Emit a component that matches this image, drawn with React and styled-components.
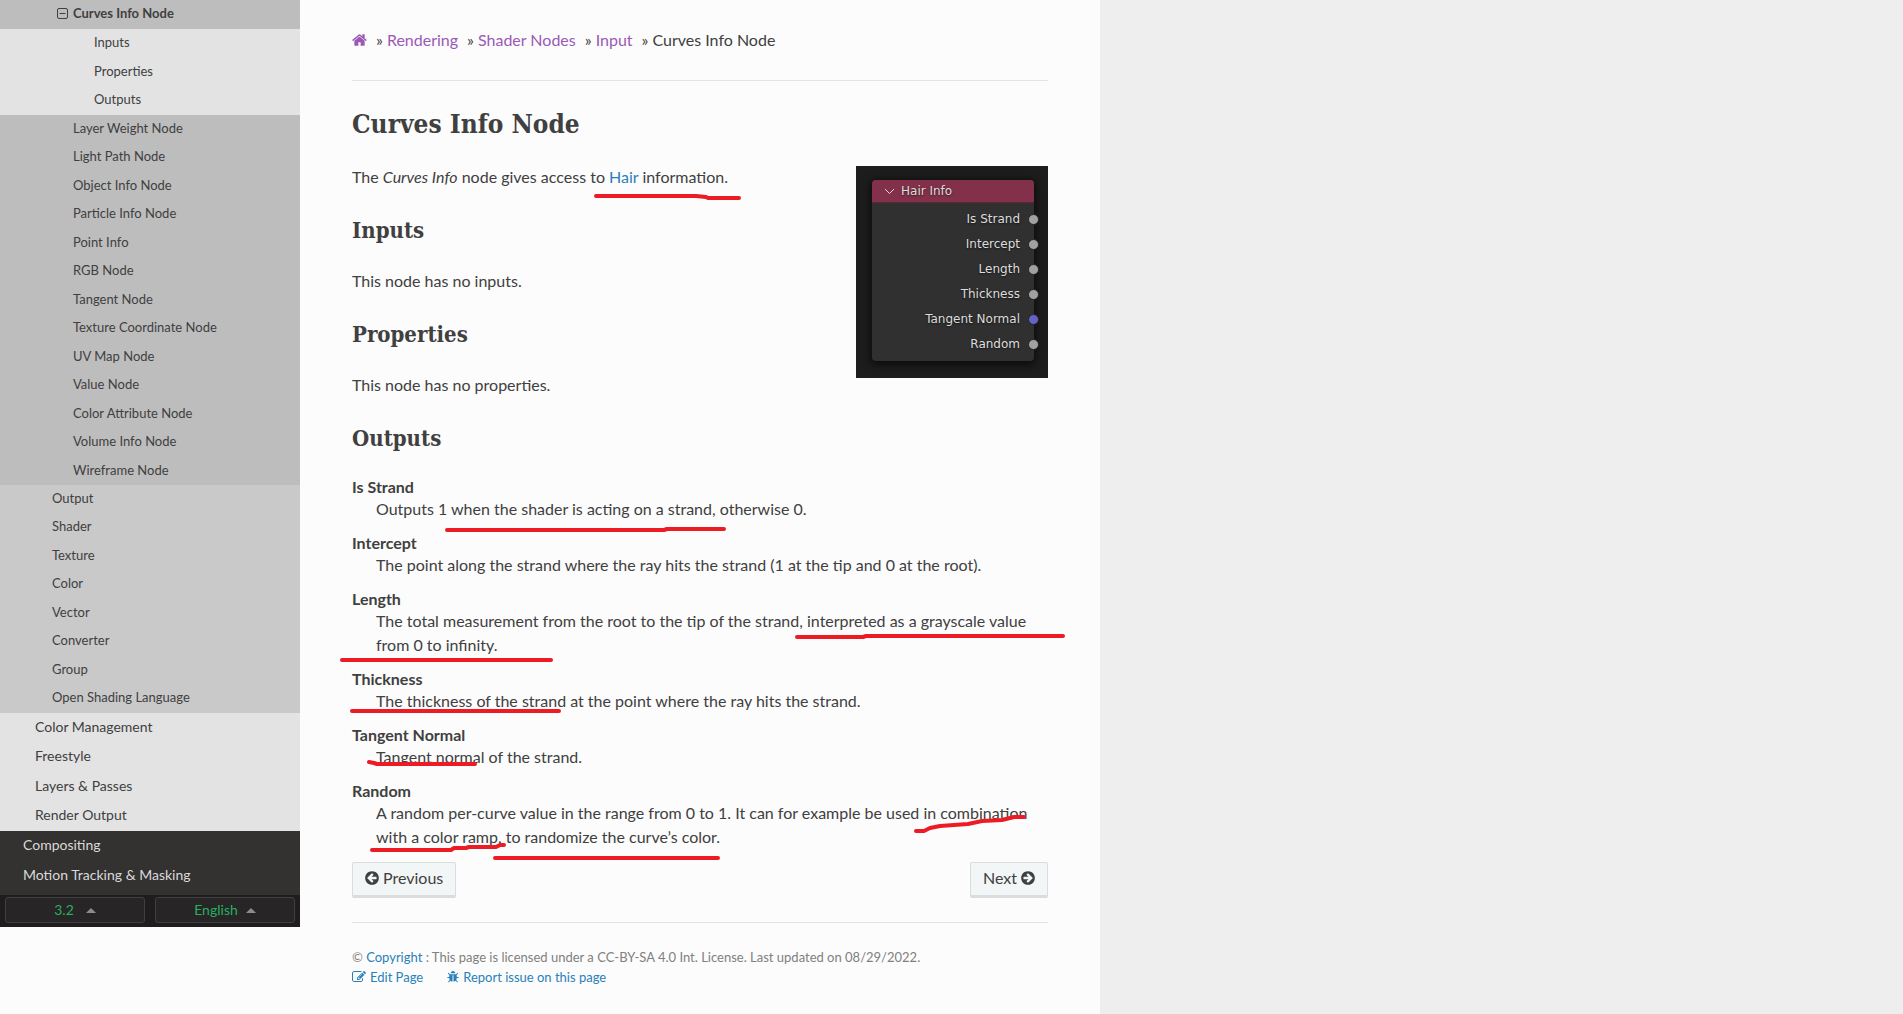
import React from "react";
import styled, { createGlobalStyle } from "styled-components";

const GlobalStyle = createGlobalStyle`
  *, *::before, *::after { box-sizing: border-box; }
  body {
    margin: 0;
    background: #eeeeee;
    color: #404040;
    font-family: Lato, "Liberation Sans", sans-serif;
    font-size: 16px;
    line-height: 24px;
  }
  a { color: #2980b9; text-decoration: none; }
`;

const Shell = styled.div`
  position: relative;
  display: flex;
  align-items: flex-start;
  max-width: 1100px;
  min-height: 100vh;
  background: #fcfcfc;
`;

/* Sidebar */

const Sidebar = styled.nav`
  flex: 0 0 300px;
  background: #343131;
`;

const MenuList = styled.ul`
  display: grid;
  grid-auto-rows: ${(p) => p.$rows};
  margin: 0;
  padding: 0 0 ${(p) => p.$bottom || 0}px;
  list-style: none;
  background: ${(p) => p.$bg};
`;

const MenuLink = styled.a`
  display: flex;
  align-items: center;
  height: 100%;
  padding-left: ${(p) => p.$indent}px;
  padding-bottom: 3px;
  color: ${(p) => (p.$light ? "#d9d9d9" : "#404040")};
  font-size: ${(p) => p.$size}px;
  font-weight: ${(p) => (p.$current ? 700 : 400)};
  line-height: 18px;
`;

const Toggle = styled.svg`
  width: 11px;
  height: 11px;
  margin: 0 5px 0 -16px;
`;

const Versions = styled.div`
  display: grid;
  grid-template-columns: 1fr 1fr;
  gap: 10px;
  padding: 2px 5px 4px;
  background: #1f1d1d;
`;

const VersionButton = styled.button`
  display: flex;
  align-items: center;
  justify-content: center;
  gap: ${(p) => p.$gap}px;
  height: 26px;
  padding: 0;
  border: 1px solid #414040;
  border-radius: 3px;
  background: #272525;
  color: #27ae60;
  font: 14px/18px Lato, "Liberation Sans", sans-serif;
`;

const Caret = styled.span`
  border: 5px solid transparent;
  border-top: 0;
  border-bottom-color: #8d8c8c;
`;

/* Content */

const Main = styled.main`
  flex: 1;
  min-width: 0;
  padding: 28px 52px 24px;
`;

const Crumbs = styled.ul`
  display: flex;
  gap: 9px;
  margin: 0;
  padding: 0;
  list-style: none;
`;

const Crumb = styled.li`
  display: flex;
  align-items: center;
  gap: 4px;
  a { display: flex; color: #9b59b6; }
`;

const Rule = styled.hr`
  height: 1px;
  margin: ${(p) => p.$top}px 0 24px;
  border: 0;
  background: #e1e4e5;
`;

const slab = `"Roboto Slab", "DejaVu Serif Condensed", "DejaVu Serif", serif`;

const Title = styled.h1`
  margin: 0 0 22px;
  font: 700 26px/38px ${slab};
`;

const Heading = styled.h2`
  margin: 0 0 22px;
  font: 700 22px/34px ${slab};
`;

const Text = styled.p`
  margin: 0 0 24px;
`;

const Definitions = styled.dl`
  margin: 0 0 13px;
`;

const Term = styled.dt`
  font-weight: 700;
  line-height: 20px;
`;

const Detail = styled.dd`
  margin: 0 0 12px 24px;
  &:last-child { margin-bottom: 0; }
`;

const Pager = styled.div`
  display: flex;
  justify-content: space-between;
`;

const PagerLink = styled.a`
  display: flex;
  align-items: center;
  gap: 4px;
  height: 36px;
  padding: 0 12px 4px;
  border: 1px solid rgba(0, 0, 0, 0.1);
  border-radius: 2px;
  background: #f3f6f6;
  box-shadow: inset 0 -2px 0 rgba(0, 0, 0, 0.1);
  color: #404040;
`;

const Footer = styled.footer`
  color: #808080;
  font-size: 13px;
  line-height: 20px;
`;

const FooterLinks = styled.div`
  display: flex;
  gap: 24px;
  a { display: flex; align-items: center; gap: 4px; }
`;

const Glyph = styled.svg`
  width: ${(p) => p.$width}px;
  height: ${(p) => p.$height}px;
  fill: currentColor;
`;

/* Node preview */

const Preview = styled.figure`
  float: right;
  width: 192px;
  margin: 1px 0 24px 24px;
  padding: 14px 14px 17px 16px;
  background: #1d1d1d;
  color: #dddddd;
  font: 12px/25px "DejaVu Sans", sans-serif;
  text-shadow: 0 1px 2px rgba(0, 0, 0, 0.6);
`;

const NodeCard = styled.div`
  border-radius: 4px;
  background: #303030;
  box-shadow: 0 2px 8px 2px rgba(0, 0, 0, 0.6);
`;

const NodeHeader = styled.div`
  display: flex;
  align-items: center;
  gap: 6px;
  height: 23px;
  padding-left: 12px;
  border-bottom: 1px solid #5b2638;
  border-radius: 4px 4px 0 0;
  background: #83314a;
`;

const Sockets = styled.ul`
  margin: 0;
  padding: 4px 0;
  list-style: none;
`;

const Socket = styled.li`
  display: flex;
  align-items: center;
  justify-content: flex-end;
  gap: 8px;
  margin-right: -5px;
  &::after {
    content: "";
    width: 11px;
    height: 11px;
    border: 1px solid #222222;
    border-radius: 50%;
    background: ${(p) => p.$color};
  }
`;

/* Hand-drawn pen marks that lie over the article */
const Marks = styled.svg`
  position: absolute;
  top: 0;
  left: 0;
  width: 1100px;
  height: 1014px;
  pointer-events: none;
  fill: none;
  stroke: #ed1c24;
  stroke-width: 4;
  stroke-linecap: round;
  stroke-linejoin: round;
`;

const icons = {
  home: {
    box: "64 0 1664 1792",
    width: 15,
    d: "M1472 992v480q0 26-19 45t-45 19h-384v-384h-256v384h-384q-26 0-45-19t-19-45v-480q0-1 .5-3t.5-3l575-474 575 474q1 2 1 6zm223-69l-62 74q-8 9-21 11h-3q-13 0-21-7l-692-577-692 577q-12 8-24 7-13-2-21-11l-62-74q-8-10-7-23.5t11-21.5l719-599q32-26 76-26t76 26l244 204v-195q0-14 9-23t23-9h192q14 0 23 9t9 23v408l219 182q10 8 11 21.5t-7 23.5z",
  },
  arrow: {
    box: "128 0 1536 1792",
    width: 14,
    d: "M1408 960v-128q0-26-19-45t-45-19h-502l189-189q19-19 19-45t-19-45l-91-91q-18-18-45-18t-45 18l-362 362-91 91q-18 18-18 45t18 45l91 91 362 362q18 18 45 18t45-18l91-91q18-18 18-45t-18-45l-189-189h502q26 0 45-19t19-45zm256-64q0 209-103 385.5t-279.5 279.5-385.5 103-385.5-103-279.5-279.5-103-385.5 103-385.5 279.5-279.5 385.5-103 385.5 103 279.5 279.5 103 385.5z",
  },
  edit: {
    box: "0 0 1792 1792",
    width: 14,
    d: "M888 1184l116-116-152-152-116 116v56h96v96h56zm440-720q-16-16-33 1l-350 350q-17 17-1 33t33-1l350-350q17-17 1-33zm80 594v190q0 119-84.5 203.5t-203.5 84.5h-832q-119 0-203.5-84.5t-84.5-203.5v-832q0-119 84.5-203.5t203.5-84.5h832q63 0 117 25 15 7 18 23 3 17-9 29l-49 49q-14 14-32 8-23-6-45-6h-832q-66 0-113 47t-47 113v832q0 66 47 113t113 47h832q66 0 113-47t47-113v-126q0-13 9-22l64-64q15-15 35-7t20 29zm-96-738l288 288-672 672h-288v-288zm444 132l-92 92-288-288 92-92q28-28 68-28t68 28l152 152q28 28 28 68t-28 68z",
  },
  bug: {
    box: "64 0 1664 1792",
    width: 12,
    d: "M1696 960q0 26-19 45t-45 19h-224q0 171-67 290l208 209q19 19 19 45t-19 45q-18 19-45 19t-45-19l-198-197q-5 5-15 13t-42 28.5-65 36.5-82 29-97 13v-896h-128v896q-51 0-101.5-13.5t-87-33-66-39-43.5-32.5l-15-14-183 207q-20 21-48 21-24 0-43-16-19-18-20.5-44.5t15.5-46.5l202-227q-58-114-58-274h-224q-26 0-45-19t-19-45 19-45 45-19h224v-294l-173-173q-19-19-19-45t19-45 45-19 45 19l173 173h844l173-173q19-19 45-19t45 19 19 45-19 45l-173 173v294h224q26 0 45 19t19 45zm-480-576h-640q0-133 93.5-226.5t226.5-93.5 226.5 93.5 93.5 226.5z",
  },
};

function Icon({ name, height = 16, flip }) {
  const { box, width, d } = icons[name];
  return (
    <Glyph $width={width} $height={height} viewBox={box} aria-hidden="true">
      <path d={d} transform={flip ? "translate(1792 0) scale(-1 1)" : undefined} />
    </Glyph>
  );
}

const sections = ["Inputs", "Properties", "Outputs"];
const inputNodes = [
  "Layer Weight Node", "Light Path Node", "Object Info Node", "Particle Info Node",
  "Point Info", "RGB Node", "Tangent Node", "Texture Coordinate Node", "UV Map Node",
  "Value Node", "Color Attribute Node", "Volume Info Node", "Wireframe Node",
];
const shaderPages = ["Output", "Shader", "Texture", "Color", "Vector", "Converter", "Group", "Open Shading Language"];
const renderPages = ["Color Management", "Freestyle", "Layers & Passes", "Render Output"];
const chapters = ["Compositing", "Motion Tracking & Masking"];

const sockets = [
  ["Is Strand", "#a1a1a1"],
  ["Intercept", "#a1a1a1"],
  ["Length", "#a1a1a1"],
  ["Thickness", "#a1a1a1"],
  ["Tangent Normal", "#6363c7"],
  ["Random", "#a1a1a1"],
];

const outputs = [
  ["Is Strand", "Outputs 1 when the shader is acting on a strand, otherwise 0."],
  ["Intercept", "The point along the strand where the ray hits the strand (1 at the tip and 0 at the root)."],
  ["Length", "The total measurement from the root to the tip of the strand, interpreted as a grayscale value from 0 to infinity."],
  ["Thickness", "The thickness of the strand at the point where the ray hits the strand."],
  ["Tangent Normal", "Tangent normal of the strand."],
  ["Random", "A random per-curve value in the range from 0 to 1. It can for example be used in combination with a color ramp, to randomize the curve’s color."],
];

const strokes = [
  "596,196 696,196 706,197 708,198 739,198",
  "447,530 664,530 667,529 724,529",
  "797,637 863,637 866,636 1063,636",
  "342,660 551,660",
  "352,711 559,711",
  "369,762 374,763 377,764 475,764",
  "916,831 924,831 930,828 940,826 968,824 982,821 1002,820 1014,817 1024,817",
  "372,850 451,850 454,848 466,848 469,847 496,847 500,845 504,845",
  "495,858 718,858",
];

function MenuGroup({ items, rows, bg, bottom, ...link }) {
  return (
    <MenuList $rows={rows} $bg={bg} $bottom={bottom}>
      {items.map((item) => (
        <li key={item}><MenuLink href="#" {...link}>{item}</MenuLink></li>
      ))}
    </MenuList>
  );
}

export default function App() {
  return (
    <>
      <GlobalStyle />
      <Shell>
        <Sidebar aria-label="Contents">
          <MenuList $rows="29px" $bg="#bdbdbd">
            <li>
              <MenuLink href="#" $indent={73} $size={13} $current>
                <Toggle viewBox="0 0 11 11" fill="none" stroke="#404040" aria-hidden="true">
                  <rect x="0.5" y="0.5" width="10" height="10" rx="1.5" />
                  <path d="M2.5 5.5h6" />
                </Toggle>
                Curves Info Node
              </MenuLink>
            </li>
          </MenuList>
          <MenuGroup items={sections} rows="29px 28px" bg="#e3e3e3" $indent={94} $size={13} />
          <MenuGroup items={inputNodes} rows="28px 29px" bg="#bdbdbd" $indent={73} $size={13} />
          <MenuGroup items={shaderPages} rows="28px 29px" bg="#c9c9c9" $indent={52} $size={13} />
          <MenuGroup items={renderPages} rows="30px 29px" bg="#e3e3e3" $indent={35} $size={14} />
          <MenuGroup items={chapters} rows="30px" bg="#343131" bottom={4} $indent={23} $size={14} $light />
          <Versions>
            <VersionButton type="button" $gap={12}>3.2<Caret /></VersionButton>
            <VersionButton type="button" $gap={8}>English<Caret /></VersionButton>
          </Versions>
        </Sidebar>

        <Main>
          <Crumbs>
            <Crumb><a href="#" aria-label="Home"><Icon name="home" /></a></Crumb>
            <Crumb><span>»</span><a href="#">Rendering</a></Crumb>
            <Crumb><span>»</span><a href="#">Shader Nodes</a></Crumb>
            <Crumb><span>»</span><a href="#">Input</a></Crumb>
            <Crumb><span>»</span><span>Curves Info Node</span></Crumb>
          </Crumbs>
          <Rule $top={28} />

          <Title>Curves Info Node</Title>
          <Preview>
            <NodeCard>
              <NodeHeader>
                <svg width="11" height="7" viewBox="0 0 11 7" fill="none" stroke="#dddddd" aria-hidden="true">
                  <path d="M1 1l4.5 4.5L10 1" />
                </svg>
                Hair Info
              </NodeHeader>
              <Sockets>
                {sockets.map(([name, color]) => <Socket key={name} $color={color}>{name}</Socket>)}
              </Sockets>
            </NodeCard>
          </Preview>
          <Text>The <em>Curves Info</em> node gives access to <a href="#">Hair</a> information.</Text>
          <Heading>Inputs</Heading>
          <Text>This node has no inputs.</Text>
          <Heading>Properties</Heading>
          <Text>This node has no properties.</Text>
          <Heading>Outputs</Heading>
          <Definitions>
            {outputs.map(([term, detail]) => (
              <React.Fragment key={term}>
                <Term>{term}</Term>
                <Detail>{detail}</Detail>
              </React.Fragment>
            ))}
          </Definitions>

          <Pager>
            <PagerLink href="#"><Icon name="arrow" />Previous</PagerLink>
            <PagerLink href="#">Next<Icon name="arrow" flip /></PagerLink>
          </Pager>
          <Rule $top={24} />
          <Footer>
            <div>© <a href="#">Copyright</a> : This page is licensed under a CC-BY-SA 4.0 Int. License. Last updated on 08/29/2022.</div>
            <FooterLinks>
              <a href="#"><Icon name="edit" height={14} />Edit Page</a>
              <a href="#"><Icon name="bug" height={14} />Report issue on this page</a>
            </FooterLinks>
          </Footer>
        </Main>

        <Marks viewBox="0 0 1100 1014" aria-hidden="true">
          {strokes.map((points) => <polyline key={points} points={points} />)}
        </Marks>
      </Shell>
    </>
  );
}
